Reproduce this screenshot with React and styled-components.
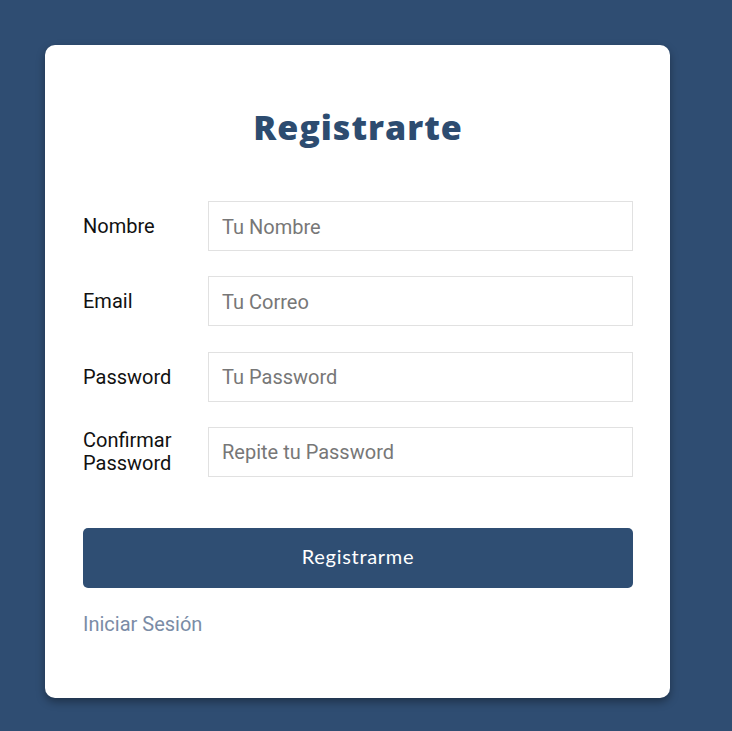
import React from "react";
import styled, { createGlobalStyle } from "styled-components";

const Global = createGlobalStyle`
  html, body { margin: 0; padding: 0; background: #2f4d72; }
  body { font-family: Roboto, "Liberation Sans", sans-serif; }
  * { box-sizing: border-box; }
`;

const Page = styled.div`
  min-height: 731px;
  padding: 45px 0 0 45px;
`;

const Card = styled.div`
  width: 625px;
  background: #fff;
  border-radius: 10px;
  box-shadow: 0 4px 8px rgba(0, 0, 0, 0.35);
  padding: 62px 37px 62px 38px;
`;

const Title = styled.h1`
  margin: 0 0 54px;
  text-align: center;
  font-family: "Open Sans", Lato, sans-serif;
  font-weight: 800;
  font-size: 34px;
  line-height: 40px;
  letter-spacing: 1px;
  color: #2d4c70;
`;

const Form = styled.form`
  display: flex;
  flex-direction: column;
  gap: 25.33px;
`;

const Row = styled.div`
  display: grid;
  grid-template-columns: 125px 1fr;
  align-items: center;
`;

const Label = styled.label`
  font-size: 20px;
  line-height: 23px;
  color: #111;
  padding-right: 10px;
  padding-top: 1px;
`;

const Input = styled.input`
  height: 50px;
  width: 100%;
  border: 1px solid #e1e1e1;
  padding: 1px 13px 0;
  font-family: Roboto, "Liberation Sans", sans-serif;
  font-size: 20px;
  color: #222;
  outline: none;
  &::placeholder { color: #777; }
`;

const Submit = styled.button`
  margin-top: 25.67px;
  height: 60px;
  width: 100%;
  border: none;
  border-radius: 5px;
  padding: 0 0 3px;
  background: #2f4e73;
  color: #fff;
  font-family: Lato, "Noto Sans", sans-serif;
  font-size: 20px;
  letter-spacing: 0.7px;
  cursor: pointer;
`;

const LinkText = styled.a`
  display: block;
  margin-top: 25px;
  font-size: 20px;
  line-height: 23px;
  color: #7b8ca6;
  text-decoration: none;
`;

const fields = [
  { id: "nombre", label: "Nombre", ph: "Tu Nombre", type: "text" },
  { id: "email", label: "Email", ph: "Tu Correo", type: "email" },
  { id: "password", label: "Password", ph: "Tu Password", type: "password" },
  { id: "password2", label: "Confirmar Password", ph: "Repite tu Password", type: "password" },
];

export default function App() {
  return (
    <>
      <Global />
      <Page>
        <Card>
          <Title>Registrarte</Title>
          <Form onSubmit={(e) => e.preventDefault()}>
            {fields.map((f) => (
              <Row key={f.id}>
                <Label htmlFor={f.id}>{f.label}</Label>
                <Input id={f.id} type={f.type} placeholder={f.ph} />
              </Row>
            ))}
            <Submit type="submit">Registrarme</Submit>
          </Form>
          <LinkText href="#">Iniciar Sesión</LinkText>
        </Card>
      </Page>
    </>
  );
}
